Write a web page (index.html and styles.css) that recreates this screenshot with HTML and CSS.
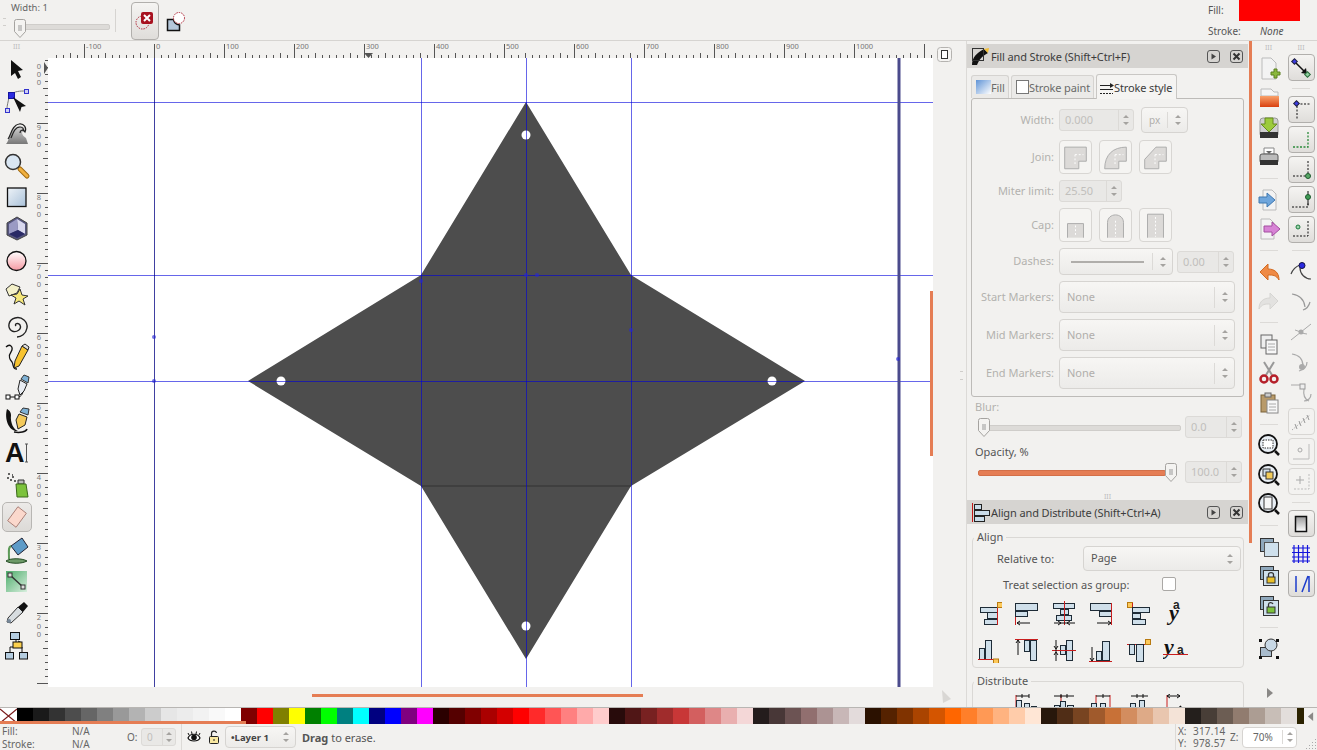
FILE: index.html
```html
<!DOCTYPE html>
<html lang="en">
<head>
<meta charset="utf-8">
<title>Inkscape</title>
<link rel="stylesheet" href="styles.css">
</head>
<body>
<svg class="defs" aria-hidden="true">
  <defs>
    <linearGradient id="gBlue" x1="0" y1="0" x2="1" y2="1"><stop offset="0" stop-color="#eef3f8"/><stop offset="1" stop-color="#a9c1d9"/></linearGradient>
    <linearGradient id="gPink" x1="0" y1="0" x2="0" y2="1"><stop offset="0" stop-color="#fff"/><stop offset="1" stop-color="#f59aa3"/></linearGradient>
    <linearGradient id="gGrey" x1="0" y1="0" x2="0" y2="1"><stop offset="0" stop-color="#d8d8d8"/><stop offset="1" stop-color="#777"/></linearGradient>
    <linearGradient id="gGreen" x1="0" y1="0" x2="1" y2="1"><stop offset="0" stop-color="#4fae6c"/><stop offset="1" stop-color="#d7eedd"/></linearGradient>
    <linearGradient id="gOrange" x1="0" y1="0" x2="0" y2="1"><stop offset="0" stop-color="#f9a26b"/><stop offset="1" stop-color="#d9400f"/></linearGradient>
    <linearGradient id="gPage" x1="0" y1="0" x2="0" y2="1"><stop offset="0" stop-color="#999"/><stop offset="1" stop-color="#fff"/></linearGradient>
    <linearGradient id="gSwatch" x1="0" y1="0" x2="1" y2="1"><stop offset="0" stop-color="#5f93d6"/><stop offset="1" stop-color="#fff"/></linearGradient>
    <symbol id="ud" viewBox="0 0 8 14"><path d="M4 2 7 5H1ZM4 12 1 9H7Z" fill="currentColor"/></symbol>
    <symbol id="thumb" viewBox="0 0 12 19"><path d="M2.5.5h7a2 2 0 0 1 2 2v10L6 18.5.5 12.500v-10a2 2 0 0 1 2-2Z" fill="#f4f3f1" stroke="#a5a3a0"/><path d="M4 7h4M4 9h4M4 11h4" stroke="#999"/></symbol>
    <symbol id="play" viewBox="0 0 13 13"><rect x=".5" y=".5" width="12" height="12" rx="2.500" fill="none" stroke="#555"/><path d="M4.500 3.500 9 6.500 4.500 9.500Z" fill="#444"/></symbol>
    <symbol id="close" viewBox="0 0 13 13"><rect x=".5" y=".5" width="12" height="12" rx="2.500" fill="none" stroke="#555"/><path d="M3.500 3.500 9.500 9.500M9.500 3.500 3.500 9.500" stroke="#333" stroke-width="2"/></symbol>
  </defs>
</svg>

<div class="app">
  <header class="top">
    <div class="grip-v"></div>
    <div class="widthctl">
      <span class="widthlbl">Width: 1</span>
      <div class="slider toolslider"><svg class="thumb"><use href="#thumb"/></svg></div>
    </div>
    <div class="topsep"></div>
    <button class="tb big">
      <svg width="20" height="20" viewBox="0 0 20 20"><circle cx="7.500" cy="11.500" r="6.500" fill="none" stroke="#b02a3a" stroke-dasharray="1.500 1"/><rect x="6" y="1" width="12" height="12" rx="2" fill="#a81220"/><path d="M9 4l6 6M15 4l-6 6" stroke="#fff" stroke-width="2"/></svg>
    </button>
    <svg class="cuticon" width="20" height="20" viewBox="0 0 20 20"><path d="M1.500 7.500h6c.5 3 2.500 5 6 5.500v5.500H1.500Z" fill="#b4c7da" stroke="#111" stroke-width="1.500"/><circle cx="13" cy="6" r="5.500" fill="#fff" stroke="#b02a3a" stroke-dasharray="1.500 1"/></svg>
    <div class="topstyle">
      <span class="slabel">Fill:</span><span class="redswatch"></span>
      <span class="slabel">Stroke:</span><span class="snone">None</span>
    </div>
  </header>

  <div class="main">
    <nav class="tools">
      <div class="toolgrip">III</div>
      <div class="tool"><svg viewBox="0 0 32 32"><path d="M11 7V23L15 20 18 26 21 24 18 18 23 17Z" fill="#111"/></svg></div>
      <div class="tool"><svg viewBox="0 0 32 32"><path d="M11 10C14 6 20 6 26 6M9 12C8 18 7 20 7 24" fill="none" stroke="#777"/><rect x="8.500" y="7.500" width="6" height="6" fill="#2a2ae0" stroke="#1414a0"/><rect x="24.500" y="4.500" width="4" height="4" fill="#cfcff5" stroke="#3333cc"/><rect x="5.500" y="23.500" width="4" height="4" fill="#cfcff5" stroke="#3333cc"/><path d="M13 12 26 21 21.500 22 20 27Z" fill="#111"/></svg></div>
      <div class="tool"><svg viewBox="0 0 32 32"><path d="M6 27C9 25 10 12 18 9 23 8 26 12 25 15 22 13 20 17 26 21L28 27Z" fill="url(#gGrey)"/><path d="M8 22C11 18 12 8 19 7 24 6 27 11 25 15 23 12 20 13 20 16M11 21C13 16 15 10 20 10 23 10 24 12 23 14" fill="none" stroke="#222" stroke-width="1.200"/></svg></div>
      <div class="tool"><svg viewBox="0 0 32 32"><path d="M20 20 27 27" stroke="#a06a10" stroke-width="5" stroke-linecap="round"/><path d="M20 20 27 27" stroke="#f0b040" stroke-width="3" stroke-linecap="round"/><circle cx="13" cy="13" r="7.500" fill="#d9e6f3" stroke="#333" stroke-width="1.500"/></svg></div>
      <div class="tool"><svg viewBox="0 0 32 32"><rect x="7.500" y="7" width="18.500" height="18.500" fill="url(#gBlue)" stroke="#111" stroke-width="1.300"/></svg></div>
      <div class="tool"><svg viewBox="0 0 32 32"><path d="M17 4 27 10V22L17 27 7 22V10Z" fill="#56567e" stroke="#444"/><path d="M17 6 25 11V21L18 17Z" fill="#d8d8ee"/><path d="M9 11 17 6 18 17 9 21Z" fill="#9a9ac4"/><path d="M9 21 18 17 25 21 17 25Z" fill="#2a2a66"/></svg></div>
      <div class="tool"><svg viewBox="0 0 32 32"><circle cx="16.500" cy="16" r="9.500" fill="url(#gPink)" stroke="#111" stroke-width="1.300"/></svg></div>
      <div class="tool"><svg viewBox="0 0 32 32"><path d="M12 7 20 10 17 16 9 19 6 12Z" fill="#f3f0c8" stroke="#333"/><path d="M20 12 22 18 28 19 23 22 25 28 19 24 14 27 16 21 11 18 17 17Z" fill="#f5e77a" stroke="#333"/></svg></div>
      <div class="tool"><svg viewBox="0 0 32 32"><path d="M16 17C14 15 18 13 20 16 22 20 17 24 12 22 7 19 8 11 15 9 22 7 28 13 27 19 26 25 21 28 17 28" fill="none" stroke="#222" stroke-width="1.400"/></svg></div>
      <div class="tool"><svg viewBox="0 0 32 32"><path d="M6 6C10 2 14 6 11 11 8 15 10 19 12 21 14 24 12 28 17 28" fill="none" stroke="#111" stroke-width="1.300"/><path d="M22 5 28 9 19 25 14 27 15 20Z" fill="#f7c330" stroke="#222"/><path d="M22 5 28 9 29 6 25 3Z" fill="#ddd" stroke="#222"/></svg></div>
      <div class="tool"><svg viewBox="0 0 32 32"><rect x="6" y="22" width="4" height="4" fill="#fff" stroke="#111"/><rect x="15" y="22" width="4" height="4" fill="#fff" stroke="#111"/><path d="M10 24H15M19 24C21 23 22 22 23 19" stroke="#111" fill="none"/><path d="M20 7 27 11 24 18 20 22 18 16Z" fill="#e8ecf2" stroke="#222"/><path d="M21 6 28 10 29 4 24 2Z" fill="#7fb2d6" stroke="#333"/></svg></div>
      <div class="tool"><svg viewBox="0 0 32 32"><path d="M7 4C4 14 9 27 18 26 14 25 10 18 11 10 11 7 9 5 7 4Z" fill="#111"/><path d="M14 27C20 28 26 27 27 24" stroke="#111" fill="none" stroke-width="1.500"/><path d="M19 9 27 12 25 20 18 24 16 15Z" fill="#f3c95a" stroke="#222"/><path d="M20 7 28 10 29 4 23 3Z" fill="#7fb2d6" stroke="#333"/></svg></div>
      <div class="tool"><svg viewBox="0 0 32 32"><text class="bigA" x="5" y="25">A</text><path d="M26.500 7V25M25 7H28M25 25H28" stroke="#555"/></svg></div>
      <div class="tool"><svg viewBox="0 0 32 32"><path d="M18 11H24V15H18Z" fill="#bbb" stroke="#333"/><path d="M16 15H26L28 28H17Z" fill="#7cc23c" stroke="#3c6a1c"/><path d="M8 5h2M12 8h2M7 9h2M10 11h2M14 12h2M12 6h1" stroke="#333" stroke-width="1.500"/></svg></div>
      <div class="tool active"><div class="eraser"><svg viewBox="0 0 30 30"><path d="M16 4 25 11 14 26 5 19Z" fill="#fbd8cc" stroke="#a67a70"/></svg></div></div>
      <div class="tool"><svg viewBox="0 0 32 32"><path d="M6 28C10 25 22 25 27 28 22 31 10 31 6 28Z" fill="#6d9a68" stroke="#224a22"/><path d="M11 13 22 5 28 14 18 22Z" fill="#5d9bc8" stroke="#223"/><path d="M11 13C8 14 9 18 9 26" stroke="#5d9a58" stroke-width="2" fill="none"/></svg></div>
      <div class="tool"><svg viewBox="0 0 32 32"><rect x="6" y="6" width="21" height="21" fill="url(#gGreen)"/><path d="M10 10 23 22" stroke="#333" stroke-width="1.500"/><rect x="8" y="8" width="4" height="4" fill="#ddd" stroke="#333"/><rect x="21" y="20" width="4" height="4" fill="#ddd" stroke="#333"/></svg></div>
      <div class="tool"><svg viewBox="0 0 32 32"><path d="M18 10 23 15 11 26 7 25 8 21Z" fill="#d8dde0" stroke="#333"/><path d="M18 10 23 15 28 9 24 5Z" fill="#111"/><circle cx="9" cy="24" r="2" fill="#789"/></svg></div>
      <div class="tool"><svg viewBox="0 0 32 32"><path d="M16 10V15M10 23V18H22V23M18 12 22 14" stroke="#111" fill="none"/><rect x="10.500" y="3.500" width="9" height="7" fill="#b5cde0" stroke="#111"/><rect x="13" y="13" width="9" height="6" fill="#fbd04e" stroke="#111"/><rect x="5.500" y="23.500" width="8" height="6.500" fill="#b5cde0" stroke="#111"/><rect x="19.500" y="23.500" width="8" height="6.500" fill="#b5cde0" stroke="#111"/></svg></div>
    </nav>

    <section class="work">
      <div class="viewport">
        <svg class="hruler" viewBox="33 41 900 17" width="900" height="17">
          <defs><pattern id="tx" width="35" height="8" patternUnits="userSpaceOnUse" y="50"><path d="M.5 3V8M7.500 5V8M14.500 5V8M21.500 5V8M28.500 5V8" stroke="#555"/></pattern></defs>
          <rect x="56" y="50" width="877" height="8" fill="url(#tx)"/>
          <path class="maj" d="M84.500 44V58M154.500 44V58M224.500 44V58M294.500 44V58M364.500 44V58M434.500 44V58M504.500 44V58M574.500 44V58M644.500 44V58M714.500 44V58M784.500 44V58M854.500 44V58M924.500 44V58"/>
          <g class="rl"><text x="86" y="49">-100</text><text x="156" y="49">0</text><text x="226" y="49">100</text><text x="296" y="49">200</text><text x="366" y="49">300</text><text x="436" y="49">400</text><text x="506" y="49">500</text><text x="576" y="49">600</text><text x="646" y="49">700</text><text x="716" y="49">800</text><text x="786" y="49">900</text><text x="856" y="49">1000</text></g>
          <path d="M364 53H373L368.500 58Z" fill="#555"/>
        </svg>
        <div class="viewrow">
          <svg class="vruler" viewBox="33 58 15 629" width="15" height="629">
            <defs><pattern id="ty" width="8" height="35" patternUnits="userSpaceOnUse" x="40" y="18"><path d="M3 .5H8M5 7.500H8M5 14.500H8M5 21.500H8M5 28.500H8" stroke="#555"/></pattern></defs>
            <rect x="40" y="60" width="8" height="627" fill="url(#ty)"/>
            <path class="maj" d="M37 123.500H48M37 193.500H48M37 263.500H48M37 333.500H48M37 403.500H48M37 473.500H48M37 543.500H48M37 613.500H48M37 683.500H48"/>
            <path d="M44 62 48 68 44 74Z" fill="#555"/>
            <g class="rl mid">
              <text y="69"><tspan x="39">0</tspan><tspan x="39" dy="8">0</tspan><tspan x="39" dy="8">0</tspan></text>
              <text y="130"><tspan x="39">9</tspan><tspan x="39" dy="8.500">0</tspan><tspan x="39" dy="8">0</tspan></text>
              <text y="200"><tspan x="39">8</tspan><tspan x="39" dy="8.500">0</tspan><tspan x="39" dy="8">0</tspan></text>
              <text y="270"><tspan x="39">7</tspan><tspan x="39" dy="8.500">0</tspan><tspan x="39" dy="8">0</tspan></text>
              <text y="340"><tspan x="39">6</tspan><tspan x="39" dy="8.500">0</tspan><tspan x="39" dy="8">0</tspan></text>
              <text y="410"><tspan x="39">5</tspan><tspan x="39" dy="8.500">0</tspan><tspan x="39" dy="8">0</tspan></text>
              <text y="480"><tspan x="39">4</tspan><tspan x="39" dy="8.500">0</tspan><tspan x="39" dy="8">0</tspan></text>
              <text y="550"><tspan x="39">3</tspan><tspan x="39" dy="8.500">0</tspan><tspan x="39" dy="8">0</tspan></text>
              <text y="620"><tspan x="39">2</tspan><tspan x="39" dy="8.500">0</tspan><tspan x="39" dy="8">0</tspan></text>
            </g>
          </svg>
          <svg class="canvas" viewBox="48 58 885 629" width="885" height="629">
            <rect x="48" y="58" width="885" height="629" fill="#fff"/>
            <path d="M526 102 631 275 805 381 631 486 526 659 421 486 248 381 421 275Z" fill="#4d4d4d"/>
            <path d="M421 486H631" stroke="#333" />
            <circle cx="526" cy="135" r="4.500" fill="#fff"/><circle cx="281" cy="381" r="4.500" fill="#fff"/><circle cx="772" cy="381" r="4.500" fill="#fff"/><circle cx="526" cy="626" r="4.500" fill="#fff"/>
            <path class="guide" d="M48 102.500H933M48 275.500H933M48 381.500H933M421.500 58V687M526.500 58V687M631.500 58V687"/>
            <path class="guide dark" d="M154.500 58V687"/>
            <path class="pageedge" d="M899 58V687"/>
            <g class="gdot"><circle cx="154" cy="337" r="2"/><circle cx="154" cy="381" r="2"/><circle cx="421" cy="281" r="2"/><circle cx="537" cy="275" r="2"/><circle cx="526" cy="275" r="2"/><circle cx="631" cy="330" r="2"/><circle cx="898" cy="359" r="2"/></g>
          </svg>
        </div>
        <div class="hscroll"><div class="hthumb"></div></div>
      </div>
      <div class="vscroll">
        <div class="vthumb"></div>
        <div class="cornerbtn"><svg viewBox="0 0 15 15"><rect x=".5" y=".5" width="14" height="14" rx="3" fill="#f5f4f2" stroke="#b5b3b0"/><rect x="4.500" y="3.500" width="6" height="8" fill="#fff" stroke="#333"/></svg></div>
        <svg class="cornertri" viewBox="0 0 11 14"><path d="M1 0 10 9 2 13Z" fill="#d9d7d4"/></svg>
        <span class="vgrip"></span>
      </div>
    </section>

    <aside class="dock">
      <div class="dtitle">
        <svg width="19" height="19" viewBox="0 0 19 19"><path d="M1 18C1 10 6 6 13 2L17 6C11 9 8 13 6 18Z" fill="#111"/><path d="M13 2 17 6 18 1Z" fill="#f3bf37"/><rect x="1.500" y="1.500" width="11" height="12" fill="none" stroke="#333"/></svg>
        <span class="dname">Fill and Stroke (Shift+Ctrl+F)</span>
        <svg class="dbtn"><use href="#play"/></svg><svg class="dbtn"><use href="#close"/></svg>
      </div>
      <div class="tabs">
        <div class="tab t1"><svg width="15" height="14"><rect width="15" height="14" fill="url(#gSwatch)"/></svg>Fill</div>
        <div class="tab t2"><svg width="13" height="14"><rect x=".5" y=".5" width="12" height="13" fill="#fff" stroke="#777"/></svg>Stroke paint</div>
        <div class="tab t3"><svg width="14" height="13" viewBox="0 0 14 13"><path d="M0 4.500H10M0 8.500H13" stroke="#222"/><path d="M0 12.500H13" stroke="#222" stroke-dasharray="2 1"/><path d="M10 2 14 4.500 10 7Z" fill="#222"/></svg>Stroke style</div>
      </div>
      <div class="pane">
        <div class="row h26"><label>Width:</label><div class="spin w75"><span class="val">0.000</span><span class="arr"><svg class="ud"><use href="#ud"/></svg></span></div><div class="combo small w47"><span>px</span><span class="arr"><svg class="ud"><use href="#ud"/></svg></span></div></div>
        <div class="row h35"><label>Join:</label>
          <div class="btnset">
            <div class="sbtn"><svg viewBox="0 0 33 33"><path d="M5 29V6H28V21H20V29Z" fill="#dcdad8" stroke="#aaa"/><path d="M16 14h9M16 14v12" stroke="#fff" stroke-dasharray="2 2"/></svg></div>
            <div class="sbtn"><svg viewBox="0 0 33 33"><path d="M5 29C5 14 14 6 28 6V21H20V29Z" fill="#dcdad8" stroke="#aaa"/><path d="M16 14h9M16 14v12" stroke="#fff" stroke-dasharray="2 2"/></svg></div>
            <div class="sbtn"><svg viewBox="0 0 33 33"><path d="M5 29V19L17 6H28V21H20V29Z" fill="#dcdad8" stroke="#aaa"/><path d="M16 14h9M16 14v12" stroke="#fff" stroke-dasharray="2 2"/></svg></div>
          </div>
        </div>
        <div class="row h22"><label>Miter limit:</label><div class="spin w63"><span class="val">25.50</span><span class="arr"><svg class="ud"><use href="#ud"/></svg></span></div></div>
        <div class="row h34"><label>Cap:</label>
          <div class="btnset">
            <div class="sbtn"><svg viewBox="0 0 33 33"><path d="M8 30V15H25V30" fill="#dcdad8" stroke="#aaa"/><path d="M16.500 17V29" stroke="#fff" stroke-dasharray="2 2"/></svg></div>
            <div class="sbtn"><svg viewBox="0 0 33 33"><path d="M8 30V14C8 3 25 3 25 14V30" fill="#dcdad8" stroke="#aaa"/><path d="M16.500 12V29" stroke="#fff" stroke-dasharray="2 2"/></svg></div>
            <div class="sbtn"><svg viewBox="0 0 33 33"><path d="M8 30V5H25V30" fill="#dcdad8" stroke="#aaa"/><path d="M16.500 8V29" stroke="#fff" stroke-dasharray="2 2"/></svg></div>
          </div>
        </div>
        <div class="row h27"><label>Dashes:</label><div class="combo w114"><span class="dashline"></span><span class="arr"><svg class="ud"><use href="#ud"/></svg></span></div><div class="spin w57 ml4"><span class="val">0.00</span><span class="arr"><svg class="ud"><use href="#ud"/></svg></span></div></div>
        <div class="row h32"><label>Start Markers:</label><div class="combo w176"><span class="ctext">None</span><span class="arr"><svg class="ud"><use href="#ud"/></svg></span></div></div>
        <div class="row h32"><label>Mid Markers:</label><div class="combo w176"><span class="ctext">None</span><span class="arr"><svg class="ud"><use href="#ud"/></svg></span></div></div>
        <div class="row h32"><label>End Markers:</label><div class="combo w176"><span class="ctext">None</span><span class="arr"><svg class="ud"><use href="#ud"/></svg></span></div></div>
      </div>
      <div class="capt off">Blur:</div>
      <div class="sl-row"><div class="slider wide"><svg class="thumb"><use href="#thumb"/></svg></div><div class="spin w57"><span class="val">0.0</span><span class="arr"><svg class="ud"><use href="#ud"/></svg></span></div></div>
      <div class="capt">Opacity, %</div>
      <div class="sl-row"><div class="slider wide full"><svg class="thumb"><use href="#thumb"/></svg></div><div class="spin w57"><span class="val">100.0</span><span class="arr"><svg class="ud"><use href="#ud"/></svg></span></div></div>
      <div class="dgrip">III</div>
      <div class="dtitle">
        <svg width="19" height="19" viewBox="0 0 19 19"><path d="M1.500 0V19" stroke="#c01818"/><rect x="3.500" y="1.500" width="7" height="5" fill="#c9dbe8" stroke="#222"/><rect x="3.500" y="7.500" width="15" height="5" fill="#c9dbe8" stroke="#222"/><rect x="3.500" y="13.500" width="10" height="5" fill="#c9dbe8" stroke="#222"/></svg>
        <span class="dname">Align and Distribute (Shift+Ctrl+A)</span>
        <svg class="dbtn"><use href="#play"/></svg><svg class="dbtn"><use href="#close"/></svg>
      </div>
      <fieldset class="frame first">
        <legend>Align</legend>
        <div class="relrow"><span class="rellbl">Relative to:</span><div class="combo w158"><span class="dark ctext">Page</span><span class="arr noline"><svg class="ud"><use href="#ud"/></svg></span></div></div>
        <div class="treat"><span>Treat selection as group:</span><span class="check"></span></div>
        <div class="aligns">
          <svg viewBox="0 0 26 26"><rect class="b" x="4.500" y="7.500" width="17" height="5"/><rect class="b" x="11.500" y="12.500" width="10" height="6"/><rect class="b" x="8.500" y="19.500" width="13" height="5"/><path class="r" d="M21.500 3V25"/><rect class="y" x="21.500" y="2.500" width="5" height="5"/></svg>
          <svg viewBox="0 0 26 26"><path class="r" d="M2.500 3V25"/><rect class="b" x="2.500" y="3.500" width="22" height="7"/><rect class="b" x="2.500" y="11.500" width="12" height="5"/><rect class="b" x="2.500" y="17.500" width="7" height="0"/><path class="k" d="M4 23H17M7 21 4 23 7 25"/></svg>
          <svg viewBox="0 0 26 26"><rect class="b" x="2.500" y="3.500" width="21" height="5"/><rect class="b" x="9.500" y="9.500" width="8" height="5"/><rect class="b" x="5.500" y="15.500" width="15" height="5"/><path class="r" d="M13.500 1V25"/><path class="k" d="M3 23H24M7 21 10 23 7 25M19 21 16 23 19 25"/></svg>
          <svg viewBox="0 0 26 26"><rect class="b" x="2.500" y="3.500" width="21" height="7"/><rect class="b" x="11.500" y="11.500" width="12" height="5"/><path class="r" d="M23.500 3V25"/><path class="k" d="M9 23H23M20 21 23 23 20 25"/></svg>
          <svg viewBox="0 0 26 26"><rect class="y" x="1.500" y="2.500" width="5" height="5"/><path class="r" d="M6.500 3V25"/><rect class="b" x="6.500" y="7.500" width="17" height="5"/><rect class="b" x="6.500" y="13.500" width="8" height="5"/><rect class="b" x="6.500" y="19.500" width="13" height="5"/></svg>
          <svg viewBox="0 0 26 26"><text class="ya small" x="10" y="9">a</text><text class="ya" x="6" y="20">y</text></svg>
          <svg viewBox="0 0 26 26"><rect class="b" x="3.500" y="11.500" width="5" height="11"/><rect class="b" x="9.500" y="3.500" width="6" height="19"/><path class="r" d="M2 22.500H20"/><rect class="y" x="17.500" y="22" width="5" height="5"/></svg>
          <svg viewBox="0 0 26 26"><path class="r" d="M2 2.500H25"/><rect class="b" x="11.500" y="3.500" width="5" height="11"/><rect class="b" x="17.500" y="3.500" width="6" height="20"/><path class="k" d="M5 3V18M3 6 5 3 7 6"/></svg>
          <svg viewBox="0 0 26 26"><rect class="b" x="9.500" y="8.500" width="5" height="9"/><rect class="b" x="15.500" y="3.500" width="6" height="20"/><path class="r" d="M1 13.500H25"/><path class="k" d="M5 3V24M3 9 5 12 7 9M3 18 5 15 7 18"/></svg>
          <svg viewBox="0 0 26 26"><rect class="b" x="8.500" y="14.500" width="5" height="9"/><rect class="b" x="14.500" y="4.500" width="7" height="19"/><path class="r" d="M1 24.500H24"/><path class="k" d="M4 10V24M2 21 4 24 6 21"/></svg>
          <svg viewBox="0 0 26 26"><path class="r" d="M1 7.500H21"/><rect class="b" x="3.500" y="7.500" width="5" height="10"/><rect class="b" x="10.500" y="7.500" width="7" height="17"/><rect class="y" x="19.500" y="2.500" width="5" height="5"/></svg>
          <svg viewBox="0 0 26 26"><text class="ya" x="1" y="17">y</text><text class="ya small" x="14" y="17">a</text><path class="r" d="M0 17.500H25"/></svg>
        </div>
      </fieldset>
      <fieldset class="frame second">
        <legend>Distribute</legend>
        <div class="dist">
          <svg viewBox="0 0 24 24"><path class="r" d="M2 1V24"/><path class="k" d="M2 2H15M8 0V4M15 0V4"/><rect class="b" x="2.500" y="6.500" width="5" height="14"/><rect class="b" x="10.500" y="9.500" width="5" height="14"/><rect class="b" x="17.500" y="12.500" width="5" height="11"/></svg>
          <svg viewBox="0 0 24 24"><path class="r" d="M9 1V24"/><path class="k" d="M2 2H22M9 0V4M15 0V4"/><rect class="b" x="2.500" y="11.500" width="5" height="12"/><rect class="b" x="8.500" y="7.500" width="5" height="16"/><rect class="b" x="15.500" y="11.500" width="6" height="12"/></svg>
          <svg viewBox="0 0 24 24"><path class="r" d="M6 1V24M20 1V24"/><path class="k" d="M6 2H20M13 0V4"/><rect class="b" x="1.500" y="9.500" width="5" height="14"/><rect class="b" x="10.500" y="9.500" width="5" height="14"/></svg>
          <svg viewBox="0 0 24 24"><path class="k" d="M3 2H20M9 0V4M15 0V4"/><rect class="b" x="2.500" y="9.500" width="5" height="14"/><rect class="b" x="11.500" y="6.500" width="5" height="16"/></svg>
          <svg viewBox="0 0 24 24"><path class="r" d="M1 1V24"/><path class="k" d="M1 2H14M4 0 1 2 4 4M11 0 14 2 11 4"/><path d="M4 20C4 14 10 14 10 20M14 12 20 24" fill="none" stroke="#111" stroke-width="2"/></svg>
        </div>
      </fieldset>
      <div class="dthumb"></div>
    </aside>

    <div class="cmds">
      <div class="grips2">III</div>
      <div class="cmd"><svg viewBox="0 0 24 24"><path d="M5 1H14L19 6V22H5Z" fill="#f3f3f3" stroke="#bbb"/><path d="M14 15H17V12H20V15H23V18H20V21H17V18H14Z" fill="#8ab83c" stroke="#5a8020"/></svg></div>
      <div class="cmd"><svg viewBox="0 0 24 24"><path d="M4 3H14L17 6H21V10H4Z" fill="#f5f5f5" stroke="#bbb"/><rect x="3" y="10" width="19" height="11" fill="url(#gOrange)"/></svg></div>
      <div class="cmd"><svg viewBox="0 0 24 24"><rect x="3" y="2" width="18" height="19" rx="3" fill="#cfcfcf" stroke="#999"/><rect x="3" y="16" width="18" height="6" fill="#333"/><path d="M8 2H16V8H20L12 16 4 8H8Z" fill="#9ccb3c" stroke="#668a20"/></svg></div>
      <div class="cmd"><svg viewBox="0 0 24 24"><path d="M7 3H17V9H7Z" fill="#fff" stroke="#888"/><rect x="3" y="9" width="18" height="9" rx="2" fill="#bbb" stroke="#555"/><rect x="3" y="15" width="18" height="5" fill="#333"/><path d="M9 6h6L12 9Z" fill="#666"/></svg></div>
      <div class="csep"></div>
      <div class="cmd"><svg viewBox="0 0 24 24"><path d="M6 2H15L19 6V22H6Z" fill="#f3f3f3" stroke="#bbb"/><path d="M2 9H10V5L18 12 10 19V15H2Z" fill="#6fa6dc" stroke="#3f78b0"/></svg></div>
      <div class="cmd"><svg viewBox="0 0 24 24"><path d="M4 2H13L17 6V22H4Z" fill="#f3f3f3" stroke="#bbb"/><path d="M7 9H15V5L23 12 15 19V15H7Z" fill="#d783d5" stroke="#a24ea0"/></svg></div>
      <div class="csep"></div>
      <div class="cmd"><svg viewBox="0 0 24 24"><path d="M3 12 11 4V9C17 9 22 12 22 20 19 15 16 15 11 15V20Z" fill="#ef8a45" stroke="#d26a20"/></svg></div>
      <div class="cmd"><svg viewBox="0 0 24 24"><path d="M21 12 13 4V9C7 9 2 12 2 20 5 15 8 15 13 15V20Z" fill="#e3e2e0" stroke="#d6d5d2"/></svg></div>
      <div class="csep"></div>
      <div class="cmd"><svg viewBox="0 0 24 24"><rect x="4" y="3" width="11" height="13" fill="#eee" stroke="#666"/><rect x="9" y="8" width="11" height="14" fill="#f7f7f7" stroke="#666"/><path d="M11 12h7M11 15h7M11 18h7" stroke="#aaa"/></svg></div>
      <div class="cmd"><svg viewBox="0 0 24 24"><path d="M7 1 15 14M17 1 9 14" stroke="#999" stroke-width="2"/><circle cx="7" cy="18" r="3.500" fill="none" stroke="#b5202a" stroke-width="2.500"/><circle cx="17" cy="18" r="3.500" fill="none" stroke="#b5202a" stroke-width="2.500"/></svg></div>
      <div class="cmd"><svg viewBox="0 0 24 24"><rect x="4" y="4" width="14" height="17" fill="#b89a6a" stroke="#7a6238"/><rect x="8" y="2" width="6" height="4" fill="#ccc" stroke="#666"/><rect x="10" y="9" width="11" height="13" fill="#f7f7f7" stroke="#888"/><path d="M12 13h7M12 16h7M12 19h7" stroke="#aaa"/></svg></div>
      <div class="csep"></div>
      <div class="cmd"><svg viewBox="0 0 24 24"><circle cx="11" cy="11" r="9" fill="#e9eff5" stroke="#111" stroke-width="1.800"/><rect x="6" y="7" width="10" height="8" fill="#fff" stroke="#333" stroke-dasharray="1.500 1"/><path d="M18 18 22 22" stroke="#111" stroke-width="2.500"/></svg></div>
      <div class="cmd"><svg viewBox="0 0 24 24"><circle cx="11" cy="11" r="9" fill="#e9eff5" stroke="#111" stroke-width="1.800"/><rect x="6" y="6" width="7" height="7" fill="#cfdde8" stroke="#333"/><rect x="9" y="9" width="7" height="7" fill="#f3cc5a" stroke="#333"/><path d="M18 18 22 22" stroke="#111" stroke-width="2.500"/></svg></div>
      <div class="cmd"><svg viewBox="0 0 24 24"><circle cx="11" cy="11" r="9" fill="#e9eff5" stroke="#111" stroke-width="1.800"/><rect x="7" y="5" width="8" height="12" fill="#f7f7f7" stroke="#333"/><path d="M18 18 22 22" stroke="#111" stroke-width="2.500"/></svg></div>
      <div class="csep"></div>
      <div class="cmd"><svg viewBox="0 0 24 24"><rect x="3.500" y="3.500" width="13" height="13" fill="#8fa8bc" stroke="#333"/><rect x="7.500" y="7.500" width="14" height="14" fill="#cfe0ec" stroke="#555"/></svg></div>
      <div class="cmd"><svg viewBox="0 0 24 24"><rect x="3.500" y="2.500" width="13" height="13" fill="#8fa8bc" stroke="#333"/><rect x="6.500" y="6.500" width="15" height="15" fill="#cfe0ec" stroke="#333"/><rect x="10" y="13" width="8" height="6" fill="#e9c02a" stroke="#333"/><path d="M11.500 13V10.500C11.500 8 16.500 8 16.500 10.500V13" fill="none" stroke="#333" stroke-width="1.300"/></svg></div>
      <div class="cmd"><svg viewBox="0 0 24 24"><rect x="3.500" y="2.500" width="13" height="13" fill="#8fa8bc" stroke="#333"/><rect x="6.500" y="6.500" width="15" height="15" fill="#cfe0ec" stroke="#333"/><rect x="10" y="13" width="8" height="6" fill="#7cc23c" stroke="#333"/><path d="M11.500 13V10.500C11.500 8 15 8 16 10" fill="none" stroke="#333" stroke-width="1.300"/></svg></div>
      <div class="csep"></div>
      <div class="cmd"><svg viewBox="0 0 24 24"><rect x="3.500" y="11.500" width="11" height="9" fill="#a9bccd" stroke="#333"/><circle cx="14" cy="9" r="6" fill="#c9d9e6" stroke="#333"/><path d="M2 3h3v3H2ZM19 3h3v3h-3ZM2 20h3v3H2ZM19 20h3v3h-3Z" fill="#111"/></svg></div>
      <svg class="morearrow" viewBox="0 0 8 12"><path d="M1 1 7 6 1 11Z" fill="#8a8886"/></svg>
    </div>

    <div class="snap">
      <div class="grips2 g3">III</div>
      <div class="tb"><svg viewBox="0 0 24 24"><path d="M6 6 17 17" stroke="#111" stroke-width="1.500"/><path d="M12 17 18 18 17 12Z" fill="#111"/><rect x="3.500" y="3.500" width="4" height="4" transform="rotate(45 5.500 5.500)" fill="#3a3ae0" stroke="#224"/><rect x="16.500" y="16.500" width="4" height="4" transform="rotate(45 18.500 18.500)" fill="#8fd0a0" stroke="#2a6a3a"/></svg></div>
      <div class="ssep"></div>
      <div class="tb"><svg viewBox="0 0 24 24"><path d="M8 6H22M8 8V22" stroke="#111" stroke-dasharray="2 1.500"/><rect x="5.500" y="3.500" width="4" height="4" transform="rotate(45 7.500 5.500)" fill="#3a3ae0" stroke="#224"/></svg></div>
      <div class="tb"><svg viewBox="0 0 24 24"><path d="M19 4V19H4" fill="none" stroke="#2a8a3a" stroke-dasharray="2 1.500" stroke-width="1.300"/></svg></div>
      <div class="tb"><svg viewBox="0 0 24 24"><path d="M19 3V17M4 18H16" stroke="#111" stroke-dasharray="2 1.500"/><circle cx="19" cy="18" r="2.500" fill="#5aa868" stroke="#1d5a2d"/></svg></div>
      <div class="tb"><svg viewBox="0 0 24 24"><path d="M19 3V17" stroke="#111"/><path d="M3 19H19V14" stroke="#111" fill="none" stroke-dasharray="2 1.500"/><circle cx="19" cy="9" r="2.500" fill="#3f9a55" stroke="#1d5a2d"/></svg></div>
      <div class="tb"><svg viewBox="0 0 24 24"><path d="M19 3V18H4" stroke="#111" fill="none" stroke-dasharray="2 1.500"/><circle cx="9" cy="9" r="2" fill="#9fd6ae" stroke="#1d7a3d"/></svg></div>
      <div class="ssep"></div>
      <div class="plain"><svg viewBox="0 0 24 24"><path d="M2 14C4 9 8 6 11 5M11 8C11 14 16 19 22 19" fill="none" stroke="#444" stroke-width="1.200"/><circle cx="13" cy="5.500" r="3" fill="#2a2ae0" stroke="#114"/></svg></div>
      <div class="plain off"><svg viewBox="0 0 24 24"><path d="M3 4C10 5 15 8 16 17M14 20C17 19 20 16 21 12" fill="none" stroke="#999" stroke-width="1.200"/></svg></div>
      <div class="plain off"><svg viewBox="0 0 24 24"><path d="M2 20 22 4" stroke="#aaa"/><path d="M6 10C10 11 14 14 18 14" stroke="#aaa" fill="none"/><circle cx="12" cy="12" r="2.500" fill="#aaa"/></svg></div>
      <div class="plain off"><svg viewBox="0 0 24 24"><path d="M3 4C10 5 14 9 14 16M18 12C18 17 14 20 10 21" fill="none" stroke="#aaa" stroke-width="1.200"/><circle cx="13" cy="17" r="3" fill="#aaa"/></svg></div>
      <div class="plain off"><svg viewBox="0 0 24 24"><path d="M2 5H11M15 9C14 15 15 19 20 21M22 14C22 18 19 21 15 21" fill="none" stroke="#aaa" stroke-width="1.200"/><rect x="11" y="4" width="5" height="5" fill="#eee" stroke="#999"/></svg></div>
      <div class="tb dis"><svg viewBox="0 0 24 24"><path d="M3 20 21 5" stroke="#aaa" stroke-dasharray="1.500 1.500"/><path d="M6 14 8 19M10 11 12 16M14 8 16 13M18 5 20 10" stroke="#999"/></svg></div>
      <div class="tb dis"><svg viewBox="0 0 24 24"><path d="M20 4V19H4" fill="none" stroke="#bbb"/><circle cx="11" cy="10" r="2" fill="none" stroke="#aaa"/></svg></div>
      <div class="tb dis"><svg viewBox="0 0 24 24"><path d="M20 4V19H4" fill="none" stroke="#bbb" stroke-dasharray="2 1.500"/><path d="M11 6V14M7 10H15" stroke="#aaa"/></svg></div>
      <div class="ssep"></div>
      <div class="tb"><svg viewBox="0 0 24 24"><rect x="6.500" y="4.500" width="11" height="15" fill="url(#gPage)" stroke="#111" stroke-width="1.500"/></svg></div>
      <div class="plain"><svg viewBox="0 0 24 24"><path d="M5 3V21M9.500 3V21M14 3V21M18.500 3V21M3 6H21M3 10.500H21M3 15H21M3 19H21" stroke="#1414dc" stroke-width="1.200"/></svg></div>
      <div class="tb"><svg viewBox="0 0 24 24"><path d="M7 4V20M20 4V20M13 20 19 4" stroke="#1c3ccc" stroke-width="1.500"/></svg></div>
    </div>
  </div>

  <div class="palette">
    <svg class="none" viewBox="0 0 17 16"><rect width="17" height="16" fill="#fff"/><path d="M0 1 17 15M17 1 0 15" stroke="#7a1a1a" stroke-width="1.200"/></svg>
    <i style="background:#000"></i><i style="background:#1a1a1a"></i><i style="background:#333"></i><i style="background:#4d4d4d"></i><i style="background:#666"></i><i style="background:#808080"></i><i style="background:#999"></i><i style="background:#b3b3b3"></i><i style="background:#ccc"></i><i style="background:#e6e6e6"></i><i style="background:#ececec"></i><i style="background:#f2f2f2"></i><i style="background:#f9f9f9"></i><i style="background:#fff"></i>
    <i style="background:#800000"></i><i style="background:#f00"></i><i style="background:#808000"></i><i style="background:#ff0"></i><i style="background:#008000"></i><i style="background:#0f0"></i><i style="background:#008080"></i><i style="background:#0ff"></i><i style="background:#000080"></i><i style="background:#00f"></i><i style="background:#800080"></i><i style="background:#f0f"></i>
    <i style="background:#2b0000"></i><i style="background:#500"></i><i style="background:#800000"></i><i style="background:#a00"></i><i style="background:#d40000"></i><i style="background:#f00"></i><i style="background:#ff2a2a"></i><i style="background:#f55"></i><i style="background:#ff8080"></i><i style="background:#faa"></i><i style="background:#fcc"></i>
    <i style="background:#280b0b"></i><i style="background:#501616"></i><i style="background:#782121"></i><i style="background:#a02c2c"></i><i style="background:#c83737"></i><i style="background:#d35f5f"></i><i style="background:#de8787"></i><i style="background:#e9afaf"></i><i style="background:#f4d7d7"></i>
    <i style="background:#241c1c"></i><i style="background:#483737"></i><i style="background:#6c5353"></i><i style="background:#916f6f"></i><i style="background:#ac9393"></i><i style="background:#c8b7b7"></i><i style="background:#e3dbdb"></i>
    <i style="background:#2b1100"></i><i style="background:#520"></i><i style="background:#803300"></i><i style="background:#a40"></i><i style="background:#d45500"></i><i style="background:#f60"></i><i style="background:#ff7f2a"></i><i style="background:#f95"></i><i style="background:#ffb380"></i><i style="background:#fca"></i><i style="background:#ffe6d5"></i>
    <i style="background:#28170b"></i><i style="background:#502d16"></i><i style="background:#784421"></i><i style="background:#a05a2c"></i><i style="background:#c87137"></i><i style="background:#d38d5f"></i><i style="background:#deaa87"></i><i style="background:#e9c6af"></i><i style="background:#f4e3d7"></i>
    <i style="background:#241f1c"></i><i style="background:#483e37"></i><i style="background:#6c5d53"></i><i style="background:#917c6f"></i><i style="background:#ac9d93"></i><i style="background:#c8beb7"></i><i style="background:#e3dedb"></i>
    <i class="last" style="background:#2b2200"></i>
    <svg class="palarrow" viewBox="0 0 8 12"><path d="M7 1 1 6 7 11Z" fill="#8a8886"/></svg>
    <div class="palthumb"></div>
  </div>

  <footer class="status">
    <div class="stbox"><span class="lab">Fill:</span><span class="na">N/A</span><span class="lab">Stroke:</span><span class="na">N/A</span></div>
    <span class="olab">O:</span>
    <div class="spin ospin"><span class="val">0</span><span class="arr"><svg class="ud"><use href="#ud"/></svg></span></div>
    <div class="stsep"></div>
    <svg class="eye" viewBox="0 0 14 12"><path d="M1 7C3 2 11 2 13 7 11 11 3 11 1 7Z" fill="#fff" stroke="#111" stroke-width="1.200"/><circle cx="7" cy="6.500" r="2.800" fill="#111"/><path d="M2 4 1 2M5 3 4.500 .5M9 3 9.500 .5M12 4 13 2" stroke="#111"/></svg>
    <svg class="lock" viewBox="0 0 12 14"><rect x="1.500" y="6.500" width="9" height="7" rx="1" fill="#f8e7a0" stroke="#222"/><path d="M3.500 6.500V3.500C3.500 .5 8 .5 8.500 3" fill="none" stroke="#222" stroke-width="1.200"/><path d="M6 9V11" stroke="#222"/></svg>
    <div class="combo layer"><span class="lname">•Layer 1</span><span class="arr noline"><svg class="ud"><use href="#ud"/></svg></span></div>
    <span class="msg"><b>Drag</b> to erase.</span>
    <div class="coords">
      <span>X:</span><span class="num">317.14</span>
      <span>Y:</span><span class="num">978.57</span>
    </div>
    <span class="zlab">Z:</span>
    <div class="combo zoombox"><span class="zval">70%</span><span class="arr"><svg class="ud"><use href="#ud"/></svg></span></div>
    <svg class="resize" viewBox="0 0 12 12"><path d="M10 1h1v1h-1ZM7 4h1v1H7ZM10 4h1v1h-1ZM4 7h1v1H4ZM7 7h1v1H7ZM10 7h1v1h-1ZM1 10h1v1H1ZM4 10h1v1H4ZM7 10h1v1H7ZM10 10h1v1h-1Z" fill="#aaa"/></svg>
  </footer>
</div>
</body>
</html>
```
FILE: styles.css
```css
* { box-sizing: border-box; }
html, body { margin: 0; padding: 0; }
body { font-family: "Noto Sans", "Open Sans", sans-serif; font-size: 11px; color: #4c4c4c; background: #f2f1ef; overflow: hidden; }
svg { display: block; }
.defs { width: 0; height: 0; }
.app { width: 1317px; height: 750px; display: flex; flex-direction: column; overflow: hidden; }

/* top tool controls */
.top { height: 41px; flex: none; display: flex; border-bottom: 1px solid #d6d4d1; position: relative; }
.grip-v { width: 3px; height: 8px; margin: 18px 0 0 3px; border-top: 1px solid #d0cecb; border-bottom: 1px solid #d0cecb; }
.widthctl { width: 104px; margin-left: 5px; display: flex; flex-direction: column; }
.widthlbl { margin-top: 1px; line-height: 14px; font-size: 9.500px; color: #666; white-space: nowrap; }
.slider { height: 18px; display: flex; align-items: flex-start; position: relative; }
.slider::before { content: ""; position: absolute; left: 0; right: 0; top: 5px; height: 4px; border-radius: 2px; background: #dddbd8; border: 1px solid #cfcdca; }
.thumb { width: 12px; height: 19px; position: relative; }
.toolslider { margin: 4px 0 0 3px; width: 96px; }
.topsep { width: 1px; height: 23px; background: #d6d4d1; margin: 9px 0 0 0; }
.tb { width: 27px; height: 27px; flex: none; padding: 0; border: 1px solid #b1afac; border-radius: 4px; background: linear-gradient(#f5f4f2, #dfddda); display: flex; align-items: center; justify-content: center; }
.tb svg { width: 24px; height: 24px; }
.tb.big { width: 28px; height: 38px; margin: 2px 0 0 15px; }
.tb.big svg { width: 20px; height: 20px; }
.tb.dis { border-color: #d8d6d3; background: #f3f2f0; }
.cuticon { margin: 12px 0 0 7px; }
.topstyle { margin-left: auto; margin-right: 17px; display: grid; grid-template-columns: 31px 61px; grid-template-rows: 21px 19px; font-size: 10px; color: #555; }
.slabel { line-height: 20px; }
.redswatch { background: #f00; }
.snone { font-style: italic; padding-left: 21px; line-height: 21px; }

.main { height: 666px; flex: none; display: flex; }

/* left tools */
.tools { width: 33px; flex: none; display: flex; flex-direction: column; }
.toolgrip { height: 12px; flex: none; line-height: 12px; text-align: center; font-size: 7px; color: #bbb; }
.tool { height: 32px; flex: none; }
.tool svg { width: 32px; height: 32px; }
.tool.active { position: relative; }
.eraser { width: 30px; height: 30px; margin: 1px 0 0 2px; border: 1px solid #b8b6b3; border-radius: 5px; background: linear-gradient(#eceae8, #dcdad7); }
.eraser svg { width: 28px; height: 28px; }
.bigA { font-family: "Liberation Sans", sans-serif; font-weight: 700; font-size: 27px; fill: #111; }

/* workspace */
.work { flex: none; width: 933px; display: flex; position: relative; }
.viewport { width: 900px; flex: none; display: flex; flex-direction: column; }
.viewrow { display: flex; height: 629px; flex: none; }
.hruler, .vruler, .canvas { flex: none; }
.rl { font-family: "Noto Sans", sans-serif; font-size: 7.500px; fill: #777; }
.rl.mid { text-anchor: middle; }
.maj { stroke: #555; fill: none; }
.guide { stroke: rgba(0, 0, 220, .6); fill: none; }
.guide.dark { stroke: rgba(0, 0, 130, .75); }
.pageedge { stroke: #4b4b8c; stroke-width: 3; fill: none; }
.gdot circle { fill: rgba(40, 40, 210, .65); }
.hscroll { height: 20px; flex: none; padding: 7px 0 0 279px; }
.hthumb { width: 331px; height: 3px; background: #e57d54; }
.vscroll { width: 33px; flex: none; position: relative; }
.vthumb { position: absolute; left: -3px; top: 250px; width: 3px; height: 165px; background: #e57d54; }
.cornerbtn { position: absolute; left: 4px; top: 6px; width: 15px; height: 15px; }
.cornertri { position: absolute; left: 8px; top: 649px; width: 11px; height: 14px; }
.vgrip { position: absolute; left: 27px; top: 330px; width: 3px; height: 9px; border-top: 1px solid #cfcdca; border-bottom: 1px solid #cfcdca; }

/* dock */
.dock { width: 286px; flex: none; height: 666px; overflow: hidden; position: relative; padding: 3px 4px 0 0; border-left: 1px solid #dcdad7; }
.dthumb { position: absolute; right: 0; top: 0; width: 3px; height: 502px; background: #e57d54; }
.dtitle { height: 24px; display: flex; align-items: center; background: #d6d4d1; padding: 0 5px 0 4px; }
.dname { flex: 1; font-size: 11px; letter-spacing: -.12px; color: #3c3c3c; margin-left: 1px; white-space: nowrap; }
.dbtn { width: 13px; height: 13px; margin-left: 10px; }
.tabs { display: flex; align-items: flex-end; height: 30px; margin-left: 4px; gap: 2px; white-space: nowrap; letter-spacing: -.12px; }
.tab { height: 23px; display: flex; align-items: center; gap: 0; padding: 0 0 0 4px; border: 1px solid #d5d3d0; border-bottom: 0; border-radius: 3px 3px 0 0; color: #6a6a6a; background: #ebeae8; flex: none; }
.t1 { width: 38px; padding-left: 4px; }
.t2 { width: 83px; }
.t3 { width: 81px; height: 25px; background: #f5f4f2; color: #3c3c3c; border-color: #c9c7c4; margin-bottom: -1px; position: relative; padding-left: 3px; }
.pane { margin: 0 4px; width: 273px; height: 299px; border: 1px solid #bdbbb8; border-radius: 3px; padding-top: 8px; display: flex; flex-direction: column; gap: 6px; }
.row { display: flex; align-items: center; }
.row label { width: 82px; margin: 0 5px 2px 0; text-align: right; flex: none; color: #b3b1ae; font-size: 11px; white-space: nowrap; }
.h22 { height: 22px; } .h26 { height: 26px; } .h27 { height: 27px; } .h32 { height: 32px; } .h34 { height: 34px; } .h35 { height: 34px; margin-top: 1px; }
.spin { height: 22px; display: flex; align-items: center; background: #e9e8e6; border: 1px solid #dcdad7; border-radius: 3px; color: #c1bfbc; flex: none; }
.val { flex: 1; padding: 0 0 1px 5px; }
.arr { width: 15px; height: 100%; flex: none; display: flex; align-items: center; justify-content: center; border-left: 1px solid #dcdad7; color: #a5a3a0; }
.arr.noline { border-left: 0; }
.ud { width: 8px; height: 14px; }
.combo { height: 100%; display: flex; align-items: center; justify-content: space-between; border: 1px solid #d6d4d1; border-radius: 4px; background: linear-gradient(#f7f6f4, #ecebe9); color: #b0aeab; padding-left: 7px; flex: none; }
.combo > span:first-child { flex: 1; }
.ctext { padding-bottom: 2px; }
.combo .arr { height: 70%; width: 20px; }
.small { height: 26px; margin-left: 7px; font-size: 10px; }
.w47 { width: 47px; } .w57 { width: 57px; } .w63 { width: 63px; } .w75 { width: 75px; } .w114 { width: 114px; } .w158 { width: 158px; } .w176 { width: 176px; }
.ml4 { margin-left: 4px; }
.dashline { height: 2px; background: #b0aeab; margin: 0 8px 0 4px; }
.btnset { display: flex; gap: 7px; }
.sbtn { width: 33px; height: 34px; border: 1px solid #d8d6d3; border-radius: 4px; background: #f5f4f2; }
.sbtn svg { width: 31px; height: 32px; }
.capt { margin: 3px 0 0 8px; line-height: 14px; height: 15px; color: #555; }
.capt.off { color: #b3b1ae; }
.capt + .sl-row { margin-top: 1px; }
.sl-row { display: flex; align-items: center; height: 22px; margin-left: 11px; gap: 0; }
.sl-row + .capt { margin-top: 7px; }
.slider.wide { width: 203px; margin-right: 4px; height: 19px; }
.slider.wide::before { top: 7px; }
.slider.full { width: 188px; margin-right: 19px; }
.slider.full::before { background: #e57d54; border-color: #d36f48; }
.slider.full .thumb { margin-left: auto; right: -11px; }
.dgrip { height: 17px; line-height: 27px; text-align: center; font-size: 7px; color: #bbb; }
.frame { margin: 6px 4px 0 5px; padding: 0 1px; width: 272px; border: 1px solid #dad8d5; border-radius: 4px; min-width: 0; }
.frame legend { padding: 0 3px; margin-left: 0; line-height: 14px; font-size: 11px; color: #555; }
.frame.first { height: 138px; }
.frame.second { height: 60px; }
.relrow { height: 25px; display: flex; align-items: center; margin-top: 2px; }
.rellbl { width: 109px; padding-left: 23px; color: #555; }
.dark { color: #555; }
.treat { display: flex; align-items: center; height: 14px; margin-top: 6px; padding-left: 29px; color: #555; }
.treat span:first-child { width: 159px; }
.check { width: 14px; height: 14px; background: #fff; border: 1px solid #aaa8a5; border-radius: 2px; }
.aligns { display: grid; grid-template-columns: repeat(6, 26px); column-gap: 11.400px; row-gap: 11px; margin: 9px 0 0 2px; }
.aligns svg { width: 26px; height: 26px; }
.dist { display: flex; gap: 14px; padding-left: 40px; margin-top: 6px; }
.dist svg { width: 24px; height: 24px; }
.b { fill: #cfdfea; stroke: #1e2b36; }
.r { stroke: #c81e1e; fill: none; }
.y { fill: #fdc95a; stroke: #b87a10; }
.k { stroke: #111; fill: none; }
.ya { font-family: "Liberation Serif", serif; font-weight: 700; font-style: italic; font-size: 22px; fill: #111; }
.ya.small { font-family: "Liberation Sans", sans-serif; font-style: normal; font-size: 12px; fill: #222; }

/* right bars */
.cmds { width: 33px; flex: none; display: flex; flex-direction: column; }
.grips2 { height: 13px; line-height: 13px; text-align: center; font-size: 7px; color: #bbb; }
.cmd { height: 29.500px; flex: none; display: flex; align-items: center; justify-content: center; }
.cmd svg { width: 24px; height: 24px; }
.csep { height: 13px; flex: none; display: flex; align-items: center; justify-content: center; }
.csep::before { content: ""; width: 18px; height: 1px; background: #dcdad7; }
.morearrow { width: 8px; height: 12px; margin: 24px 0 0 14px; }
.snap { width: 32px; flex: none; display: flex; flex-direction: column; align-items: center; gap: 3px; }
.g3 { margin-bottom: -3px; }
.plain { width: 27px; height: 27px; flex: none; display: flex; align-items: center; justify-content: center; }
.plain svg { width: 24px; height: 24px; }
.ssep { width: 18px; height: 9px; flex: none; display: flex; align-items: center; }
.ssep::before { content: ""; width: 100%; height: 1px; background: #dcdad7; }

/* palette */
.palette { height: 17px; flex: none; display: flex; border-top: 1px solid #b8b6b3; position: relative; }
.palette i { width: 16px; height: 16px; flex: none; }
.palette i.last { width: 7px; }
.none { width: 17px; height: 16px; flex: none; }
.palarrow { width: 7px; height: 11px; margin: 3px 0 0 3px; }
.palthumb { position: absolute; left: 0; bottom: 0; width: 246px; height: 3px; background: #e57d54; }

/* status */
.status { height: 26px; flex: none; display: flex; align-items: center; font-size: 10px; color: #666; }
.stbox { width: 127px; display: grid; grid-template-columns: 70px 40px; padding: 2px 0 0 2px; line-height: 13px; }
.olab { width: 14px; }
.ospin { width: 35px; height: 18px; }
.ospin .arr { width: 13px; }
.stsep { width: 1px; height: 26px; background: #dcdad7; margin: 0 5px; }
.eye { width: 14px; height: 12px; }
.lock { width: 12px; height: 14px; margin-left: 7px; }
.combo.layer { width: 71px; height: 22px; margin-left: 5px; padding-left: 5px; color: #444; }
.lname { font-weight: 700; font-size: 9.500px; }
.layer .arr { width: 19px; }
.msg { margin-left: 6px; font-size: 11px; color: #555; }
.coords { margin-left: auto; width: 53px; height: 26px; border-left: 1px solid #dcdad7; padding-left: 2px; display: grid; grid-template-columns: 15px 36px; line-height: 12px; align-content: center; }
.num { letter-spacing: .2px; }
.zlab { width: 12px; margin-left: 2px; }
.combo.zoombox { width: 55px; height: 21px; background: #fff; padding-left: 10px; margin-right: 8px; color: #666; }
.zoombox .arr { width: 14px; }
.resize { width: 12px; height: 12px; align-self: flex-end; }
```
